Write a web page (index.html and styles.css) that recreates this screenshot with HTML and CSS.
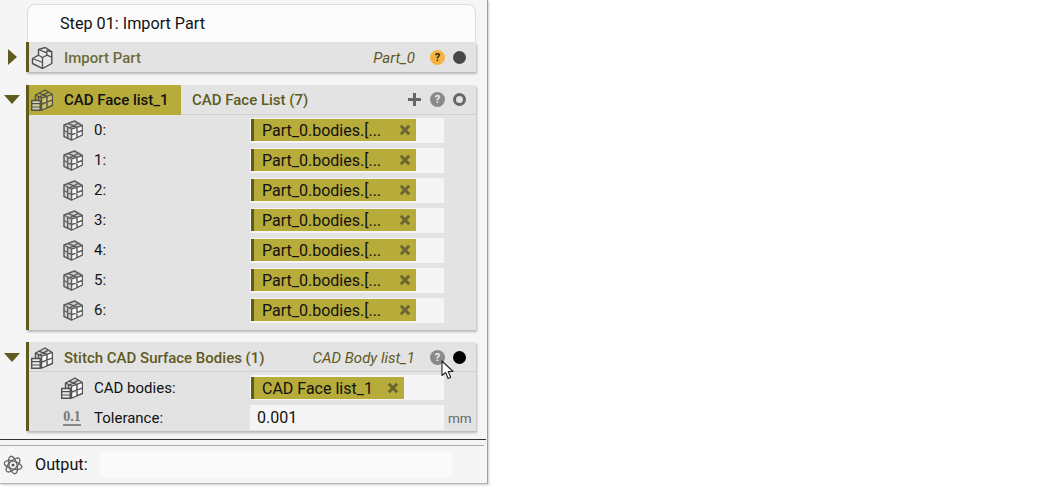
FILE: index.html
```html
<!DOCTYPE html>
<html lang="en">
<head>
<meta charset="utf-8">
<title>Step 01: Import Part</title>
<link rel="stylesheet" href="styles.css">
</head>
<body>
<svg class="defs" width="0" height="0" aria-hidden="true">
  <symbol id="cube" viewBox="0 0 20 21">
    <path d="M1 5 11.500 1 19.300 5.500V15L8.500 20 1 16.500z" fill="#d2d2d2" stroke="#5f5f5f" stroke-width="1.500" stroke-linejoin="round"/>
    <path d="M9.300 9.500 13.300 8.200v5l-4 1.400zM14.700 7.700l3.900-1.300v3.800l-3.900 1.500zM9.300 15.800l4-1.400v2.800l-4 2zM14.700 13l3.900-1.500v3l-3.900 1.900z" fill="#f9f9f9"/>
    <path d="M1 5l7.500 4 10.800-3.500M8.500 9v11M14 7.200v10.300M4.700 7v11.200M8.500 14.700l10.800-4.200M1 10.500l7.500 4.200M5 3.500l9 3.700M6.500 7.800 15.500 3.300" fill="none" stroke="#5f5f5f" stroke-width="1.400"/>
  </symbol>
  <symbol id="cube-list" viewBox="0 0 22 22">
    <path class="face" d="M4.500 6 14 1 21.300 5.500V16.500L10.500 21 4.500 19z" stroke="#505050" stroke-width="1.400" stroke-linejoin="round"/>
    <path class="win" d="M11.200 9.700 15.300 8.300v5.400l-4.100 1.500zM16.700 7.800l4-1.300v4.200l-4 1.500zM11.200 16.500l4.100-1.500v3.600l-4.100 1.700zM16.700 13.500l4-1.500v3.800l-4 1.700z"/>
    <path d="M4.500 6l6 3 10.800-3.500M10.500 9v12M16 7.500v11M7.500 7.500v4M10.500 15.200 21.300 11M8 4.200l8 3.300M8.500 8 17 3.400" fill="none" stroke="#505050" stroke-width="1.300"/>
    <path class="stack" d="M.7 11.500h8.500v9.800H.7z" stroke="#505050" stroke-width="1.400"/>
    <path d="M.7 14.700h8.500M.7 18h8.500" stroke="#505050" stroke-width="1.200"/>
  </symbol>
  <symbol id="del" viewBox="0 0 12 12">
    <path d="M1.800 1.800l8.400 8.400M10.200 1.800l-8.400 8.400" stroke="#6b6630" stroke-width="3" fill="none"/>
  </symbol>
</svg>

<main class="sidebar">
  <div class="step">Step 01: Import Part</div>

  <section class="card collapsed">
    <span class="tri tri-right"></span>
    <header class="head">
      <svg class="head-icon" viewBox="0 0 22 22" aria-hidden="true">
        <g transform="translate(1.500 .5)" stroke="#505050" stroke-linejoin="round">
          <path d="M0 11 6 7.700V2L12.700 0 19.300 4.300V16L10 21 0 16z" fill="#e9e9e9" stroke-width="1.400"/>
          <path d="M0 11l10 4v6M10 15v-5l4.300-2.300V3M14.300 3l5 1.300M6 2l8.300 3.300M6 7.700 10 10M14.300 7.700l5 2" fill="none" stroke-width="1.300"/>
        </g>
      </svg>
      <span class="title">Import Part</span>
      <span class="name">Part_0</span>
      <span class="help warn">?</span>
      <span class="dot dark"></span>
    </header>
  </section>

  <section class="card list">
    <span class="tri tri-down"></span>
    <header class="head head-tab">
      <div class="tab">
        <svg class="head-icon" aria-hidden="true"><use href="#cube-list"/></svg>
        <span>CAD Face list_1</span>
      </div>
      <span class="title tab-title">CAD Face List (7)</span>
      <span class="plus"></span>
      <span class="help">?</span>
      <span class="dot ring"></span>
    </header>
    <div class="row"><svg class="row-icon"><use href="#cube"/></svg><label>0:</label><div class="field"><span class="chip">Part_0.bodies.[...<svg class="x"><use href="#del"/></svg></span></div></div>
    <div class="row"><svg class="row-icon"><use href="#cube"/></svg><label>1:</label><div class="field"><span class="chip">Part_0.bodies.[...<svg class="x"><use href="#del"/></svg></span></div></div>
    <div class="row"><svg class="row-icon"><use href="#cube"/></svg><label>2:</label><div class="field"><span class="chip">Part_0.bodies.[...<svg class="x"><use href="#del"/></svg></span></div></div>
    <div class="row"><svg class="row-icon"><use href="#cube"/></svg><label>3:</label><div class="field"><span class="chip">Part_0.bodies.[...<svg class="x"><use href="#del"/></svg></span></div></div>
    <div class="row"><svg class="row-icon"><use href="#cube"/></svg><label>4:</label><div class="field"><span class="chip">Part_0.bodies.[...<svg class="x"><use href="#del"/></svg></span></div></div>
    <div class="row"><svg class="row-icon"><use href="#cube"/></svg><label>5:</label><div class="field"><span class="chip">Part_0.bodies.[...<svg class="x"><use href="#del"/></svg></span></div></div>
    <div class="row"><svg class="row-icon"><use href="#cube"/></svg><label>6:</label><div class="field"><span class="chip">Part_0.bodies.[...<svg class="x"><use href="#del"/></svg></span></div></div>
  </section>

  <section class="card stitch">
    <span class="tri tri-down"></span>
    <header class="head">
      <svg class="head-icon" aria-hidden="true"><use href="#cube-list"/></svg>
      <span class="title">Stitch CAD Surface Bodies (1)</span>
      <span class="name">CAD Body list_1</span>
      <span class="help">?</span>
      <span class="dot black"></span>
    </header>
    <div class="row"><svg class="row-icon row-icon-list"><use href="#cube-list"/></svg><label>CAD bodies:</label><div class="field"><span class="chip chip-wide">CAD Face list_1<svg class="x"><use href="#del"/></svg></span></div></div>
    <div class="row"><span class="num">0.1</span><label>Tolerance:</label><div class="field value">0.001</div><span class="unit">mm</span></div>
    <svg class="cursor" width="14" height="20" viewBox="0 0 14 20" aria-hidden="true"><path d="M1 1v14.500l3.600-3 2.500 6 2.600-1.200-2.500-5.800H12z" fill="#fff" stroke="#222" stroke-width="1.100" stroke-linejoin="round"/></svg>
  </section>

  <div class="rule-dark"></div>
  <div class="rule-light"></div>

  <footer class="output">
    <svg class="out-icon" viewBox="0 0 20 20" aria-hidden="true">
      <g fill="none" stroke="#666" stroke-width="1.300">
        <ellipse cx="10" cy="10" rx="9" ry="4" transform="rotate(15 10 10)"/>
        <ellipse cx="10" cy="10" rx="9" ry="4" transform="rotate(75 10 10)"/>
        <ellipse cx="10" cy="10" rx="9" ry="4" transform="rotate(135 10 10)"/>
      </g>
      <circle cx="10" cy="10" r="1.500" fill="#555"/>
    </svg>
    <span class="out-label">Output:</span>
    <div class="out-field"></div>
  </footer>
</main>
</body>
</html>
```
FILE: styles.css
```css
* { box-sizing: border-box; }
html, body { margin: 0; height: 100%; background: #fff; overflow: hidden; }
body { font-family: Roboto, "Liberation Sans", sans-serif; font-size: 15px; color: #111; }
.defs { position: absolute; }

.face { fill: var(--face, #d2d2d2); }
.win { fill: var(--win, #f9f9f9); }
.stack { fill: var(--stack, #ececec); }

.sidebar {
  width: 488px;
  height: 484px;
  background: #f5f5f5;
  border-right: 1px solid #a0a0a0;
  border-bottom: 1px solid #b5b5b5;
  box-shadow: 1px 1px 2px #ccc;
  padding: 4px 0 0 26px;
  display: flex;
  flex-direction: column;
}

.step {
  width: 449px;
  height: 38px;
  margin-left: 1px;
  background: #fcfcfc;
  border: 1px solid #dcdcdc;
  border-bottom: 0;
  border-radius: 8px 8px 0 0;
  padding: 9px 0 0 32px;
  font-size: 16.200px;
  line-height: 20px;
  color: #111;
}

.card {
  position: relative;
  width: 450px;
  background: #e3e3e3;
  border-left: 3px solid #5f5a1e;
  box-shadow: 1px 2px 2px #b9b9b9;
}
.collapsed { height: 30px; }
.list { margin-top: 13px; height: 245px; }
.stitch { margin-top: 12px; height: 89px; }

.tri { position: absolute; width: 0; height: 0; }
.tri-right { left: -21px; top: 7px; border-style: solid; border-width: 8.500px 0 8.500px 9px; border-color: transparent transparent transparent #5f5a1e; }
.tri-down { left: -25px; top: 10px; border-style: solid; border-width: 9px 8.500px 0; border-color: #5f5a1e transparent transparent; }
.stitch .tri-down { top: 11px; }

.head {
  height: 30px;
  display: flex;
  align-items: center;
  padding-right: 10px;
  border-bottom: 1px solid #d0d0d0;
}
.collapsed .head { border-bottom: 0; padding-top: 1px; }
.stitch .head { padding-top: 2px; }
.head-icon { width: 22px; height: 22px; margin-left: 2px; flex: none; }
.title { margin-left: 11px; font-weight: 500; font-size: 15px; color: #5f5a1e; }
.collapsed .title { color: #6f6c3a; }
.name { margin-left: auto; font-style: italic; font-size: 15px; color: #5f5a1e; }
.help {
  width: 15px; height: 15px; margin-left: 15px; border-radius: 50%;
  background: #8a8a8a; color: #eee; font-size: 11px; font-weight: 700;
  display: flex; align-items: center; justify-content: center;
}
.warn { background: #f7b33f; color: #222; }
.dot { width: 13px; height: 13px; margin-left: 8px; border-radius: 50%; }
.dark { background: #484848; }
.black { background: #000; }
.ring { border: 3px solid #666; }

.tab {
  width: 152px; height: 30px; display: flex; align-items: center; gap: 11px;
  background: #b7ab3a; font-weight: 500; color: #111; flex: none;
  --face: #b7ab3a; --win: #cdc46a; --stack: #d6d0a0;
}
.tab-title { margin-left: 11px; }
.plus {
  margin-left: auto; width: 13px; height: 13px; flex: none;
  background: linear-gradient(#666, #666) center / 100% 3px no-repeat, linear-gradient(#666, #666) center / 3px 100% no-repeat;
}
.plus + .help { margin-left: 9px; }

.row { height: 30px; display: flex; align-items: center; position: relative; }
.stitch .row { padding-top: 1px; }
.stitch .row label, .stitch .chip { padding-top: 1px; }
.row-icon { width: 20px; height: 21px; margin-left: 34px; flex: none; }
.row-icon-list { width: 22px; height: 22px; margin-left: 32px; }
.row label { margin-left: 11px; width: 156px; font-size: 15px; color: #111; flex: none; }
.field { width: 194px; height: 25px; background: #f5f5f5; flex: none; padding: 1.500px 0 0 1px; }
.chip {
  display: flex; align-items: center; justify-content: space-between;
  width: 165px; height: 22px;
  background: #b7ab3a; border-left: 3px solid #5f5a1e;
  padding: 0 5px 0 8px; font-size: 16px; color: #111;
}
.chip-wide { width: 153px; }
.x { width: 12px; height: 12px; flex: none; }
.num {
  width: 18px; margin: 0 2px 0 34px; flex: none;
  font-family: "Liberation Serif", serif; font-size: 14px; font-weight: 700; color: #777;
  text-align: center; border-bottom: 2px solid #888; line-height: 14px;
}
.value { padding: 0 0 0 7px; line-height: 25px; font-size: 16px; }
.unit { margin-left: 4px; font-size: 13.500px; color: #666; }

.cursor { position: absolute; left: 412px; top: 18px; }

.rule-dark { height: 1px; margin: 8px 0 0 -26px; width: 486px; background: #333; }
.rule-light { height: 1px; margin: 5px 0 0 -26px; width: 484px; background: #aaa; }

.output { margin: 6px 0 0 -26px; height: 25px; display: flex; align-items: center; }
.out-icon { width: 20px; height: 20px; margin-left: 3px; flex: none; }
.out-label { margin-left: 12px; width: 65px; font-size: 16.200px; flex: none; }
.out-field { width: 352px; height: 25px; background: #fafafa; flex: none; }
```
